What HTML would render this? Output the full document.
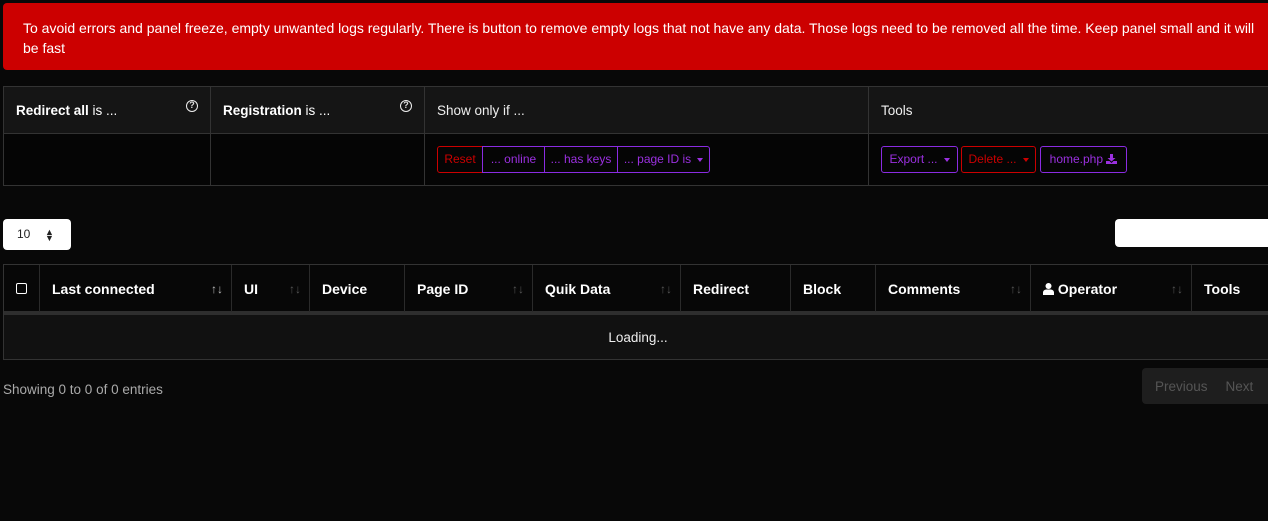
<!DOCTYPE html>
<html><head><meta charset="utf-8"><style>
*{box-sizing:border-box;margin:0;padding:0}
body{width:1268px;height:521px;background:#080808;font-family:"Liberation Sans",sans-serif;color:#ddd;position:relative;overflow:hidden;font-size:13px}
.a{position:absolute}
.banner{left:3px;top:3px;width:1275px;height:67px;background:#cc0000;border-radius:4px;color:#fff;font-size:14px;line-height:20px;padding:15px 10px 0 20px}
.banner div{width:1240px}
.q{position:absolute;top:13px;width:12px;height:12px;border:1.5px solid #eee;border-radius:50%;font-size:9px;line-height:9px;text-align:center;font-weight:bold}
.btn{position:absolute;height:27px;top:146px;border:1px solid #8a2be2;color:#9b30e0;font-size:12px;line-height:25px;text-align:center;border-radius:3px}
.red{border-color:#c00;color:#c00}
.th{position:absolute;top:265px;height:47px;border-right:1px solid #2a2a2a;font-weight:bold;color:#fff;font-size:14px;line-height:48px;padding-left:12px}
.s{position:absolute;right:8px;top:0;color:#555;font-weight:normal;font-size:12px}
.caret{display:inline-block;width:0;height:0;border-left:3px solid transparent;border-right:3px solid transparent;border-top:4px solid currentColor;vertical-align:middle;margin-left:6px}
</style></head><body>
<div class="a banner"><div>To avoid errors and panel freeze, empty unwanted logs regularly. There is button to remove empty logs that not have any data. Those logs need to be removed all the time. Keep panel small and it will be fast</div></div>

<div class="a" style="left:3px;top:86px;width:1270px;height:100px;border:1px solid #333;background:#050505"></div>
<div class="a" style="left:4px;top:87px;width:1270px;height:47px;background:#151515;border-bottom:1px solid #333"></div>
<div class="a" style="left:210px;top:87px;width:1px;height:98px;background:#333"></div>
<div class="a" style="left:424px;top:87px;width:1px;height:98px;background:#333"></div>
<div class="a" style="left:868px;top:87px;width:1px;height:98px;background:#333"></div>
<div class="a" style="left:16px;top:87px;line-height:47px;font-size:13.5px;color:#fff"><b>Redirect all</b> is ...</div>
<div class="q" style="left:186px;top:100px">?</div>
<div class="a" style="left:223px;top:87px;line-height:47px;font-size:13.5px;color:#fff"><b>Registration</b> is ...</div>
<div class="q" style="left:400px;top:100px">?</div>
<div class="a" style="left:437px;top:87px;line-height:47px;font-size:13.5px;color:#eee">Show only if ...</div>
<div class="a" style="left:881px;top:87px;line-height:47px;font-size:13.5px;color:#eee">Tools</div>

<div class="btn red" style="left:437px;width:46px;border-radius:3px 0 0 3px">Reset</div>
<div class="btn" style="left:482px;width:63px;border-radius:0">... online</div>
<div class="btn" style="left:544px;width:74px;border-radius:0">... has keys</div>
<div class="btn" style="left:617px;width:93px;border-radius:0 3px 3px 0">... page ID is<span class="caret"></span></div>
<div class="btn" style="left:881px;width:77px">Export ...<span class="caret"></span></div>
<div class="btn red" style="left:961px;width:75px">Delete ...<span class="caret"></span></div>
<div class="btn" style="left:1040px;width:87px">home.php <svg width="11" height="10" viewBox="0 0 11 10" style="vertical-align:-1px"><path d="M4 0h3v4h2.5L5.5 7.5 1.5 4H4z" fill="#9b30e0"/><path d="M0 7h3.5l2 2 2-2H11v3H0z" fill="#9b30e0"/></svg></div>

<div class="a" style="left:3px;top:219px;width:68px;height:31px;background:#fff;border-radius:4px;color:#222;font-size:12px;line-height:31px;padding-left:14px">10<span style="position:absolute;left:42px;top:0;font-size:9px;line-height:6px;padding-top:10px">▲<br>▼</span></div>
<div class="a" style="left:1115px;top:219px;width:160px;height:28px;background:#fff;border-radius:4px"></div>

<div class="a" style="left:3px;top:264px;width:1270px;height:96px;border:1px solid #333;background:#111"></div>
<div class="a" style="left:4px;top:265px;width:1270px;height:47px;background:#070707"></div>
<div class="a" style="left:4px;top:311px;width:1270px;height:4px;background:#2e2e2e"></div>
<div class="th" style="left:4px;width:36px"><span style="position:absolute;left:12px;top:18px;width:11px;height:11px;border:1.5px solid #fff;border-radius:2px"></span></div>
<div class="th" style="left:40px;width:192px">Last connected<span class="s" style="color:#bbb">↑↓</span></div>
<div class="th" style="left:232px;width:78px">UI<span class="s">↑↓</span></div>
<div class="th" style="left:310px;width:95px">Device</div>
<div class="th" style="left:405px;width:128px">Page ID<span class="s">↑↓</span></div>
<div class="th" style="left:533px;width:148px">Quik Data<span class="s">↑↓</span></div>
<div class="th" style="left:681px;width:110px">Redirect</div>
<div class="th" style="left:791px;width:85px">Block</div>
<div class="th" style="left:876px;width:155px">Comments<span class="s">↑↓</span></div>
<div class="th" style="left:1031px;width:161px"><svg width="11" height="12" viewBox="0 0 11 12" style="vertical-align:-1px"><circle cx="5.5" cy="3" r="3" fill="#fff"/><path d="M0 12v-2.5C0 7.5 2 6.5 3.5 6.5h4C9 6.5 11 7.5 11 9.5V12z" fill="#fff"/></svg> Operator<span class="s">↑↓</span></div>
<div class="th" style="left:1192px;width:90px;border:none">Tools</div>
<div class="a" style="left:4px;top:316px;width:1268px;height:44px;line-height:44px;text-align:center;color:#eee;font-size:13.5px">Loading...</div>

<div class="a" style="left:3px;top:382px;color:#aaa;font-size:13.5px">Showing 0 to 0 of 0 entries</div>
<div class="a" style="left:1142px;top:368px;width:140px;height:36px;background:#1e1e1e;border-radius:4px;color:#555;font-size:13.5px;line-height:38px"><span style="margin-left:13px">Previous</span><span style="margin-left:18px">Next</span></div>
</body></html>
